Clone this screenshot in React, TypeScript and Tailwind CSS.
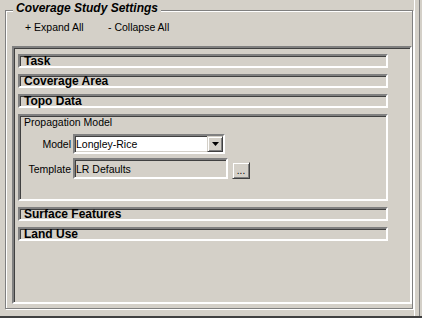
import React from 'react';

const sunken =
    'border-2 border-t-[#808080] border-l-[#808080] border-b-white border-r-white shadow-[inset_1px_1px_0_#404040,inset_-1px_-1px_0_#d4d0c8]';
const raised =
    'border border-t-[#d4d0c8] border-l-[#d4d0c8] border-b-[#404040] border-r-[#404040] shadow-[inset_1px_1px_0_#fff,inset_-1px_-1px_0_#808080] bg-[#d4d0c8]';

function SectionBar({ title }: { title: string }) {
    return (
        <div className={`ml-[4px] w-[370px] h-[14px] ${sunken}`}>
            <div className="pl-[4px] text-[12px] font-bold leading-[11px] text-black whitespace-nowrap">
                {title}
            </div>
        </div>
    );
}

export default function App() {
    return (
        <div
            className="w-[422px] h-[318px] bg-[#d4d0c8] overflow-hidden flex flex-col text-black"
            style={{ fontFamily: '"Liberation Sans", Arial, sans-serif' }}
        >
            <div className="h-[316px] flex">
                {/* Left area with the group box */}
                <div className="w-[414px] pl-[5px] pt-[10px]">
                    <div className="relative w-[408px] h-[299px] border border-[#808080] shadow-[1px_1px_0_#fff,inset_1px_1px_0_#fff]">
                        {/* Group title */}
                        <div className="absolute top-[-10px] left-[7px] px-[3px] bg-[#d4d0c8] text-[12px] font-bold italic leading-[14px] whitespace-nowrap">
                            Coverage Study Settings
                        </div>

                        {/* Expand / Collapse */}
                        <div className="flex pt-[10px] pl-[19px] text-[10.5px] leading-[13px]">
                            <span className="w-[83px]">+ Expand All</span>
                            <span>- Collapse All</span>
                        </div>

                        {/* Sunken panel */}
                        <div className={`mt-[12px] ml-[6px] w-[400px] h-[258px] ${sunken}`}>
                            <div className="flex flex-col gap-[6px] pt-[6px]">
                                <SectionBar title="Task" />
                                <SectionBar title="Coverage Area" />
                                <SectionBar title="Topo Data" />

                                {/* Propagation Model (expanded) */}
                                <div className={`ml-[4px] w-[370px] h-[87px] ${sunken}`}>
                                    <div className="pl-[4px] text-[10.5px] leading-[13px]">Propagation Model</div>

                                    <div className="flex items-center mt-[5px]">
                                        <div className="w-[52px] text-right text-[10.5px] leading-[13px] pr-[1px]">Model</div>
                                        <div className={`ml-[1px] w-[152px] h-[20px] bg-white flex ${sunken}`}>
                                            <div className="flex-1 pl-[1px] text-[10.5px] leading-[16px]">Longley-Rice</div>
                                            <div className={`w-[16px] h-[16px] flex items-center justify-center ${raised}`}>
                                                <svg width="7" height="4" viewBox="0 0 7 4">
                                                    <path d="M0 0h7L3.5 4z" fill="#000" />
                                                </svg>
                                            </div>
                                        </div>
                                    </div>

                                    <div className="flex items-start mt-[4px]">
                                        <div className="w-[52px] pt-[5px] text-right text-[10.5px] leading-[13px] pr-[1px]">Template</div>
                                        <div className={`ml-[1px] w-[155px] h-[21px] ${sunken}`}>
                                            <div className="pl-[1px] pt-[3px] text-[10.5px] leading-[13px]">LR Defaults</div>
                                        </div>
                                        <button
                                            className={`ml-[4px] mt-[4px] w-[18px] h-[17px] flex items-end justify-center pb-[2px] text-[10px] leading-[10px] ${raised}`}
                                        >
                                            ...
                                        </button>
                                    </div>
                                </div>

                                <SectionBar title="Surface Features" />
                                <SectionBar title="Land Use" />
                            </div>
                        </div>
                    </div>
                </div>

                {/* Right window edge */}
                <div className="w-px bg-white" />
                <div className="w-[4px]" />
                <div className="w-px bg-[#808080]" />
            </div>
            <div className="h-[2px] bg-[#404040]" />
        </div>
    );
}
